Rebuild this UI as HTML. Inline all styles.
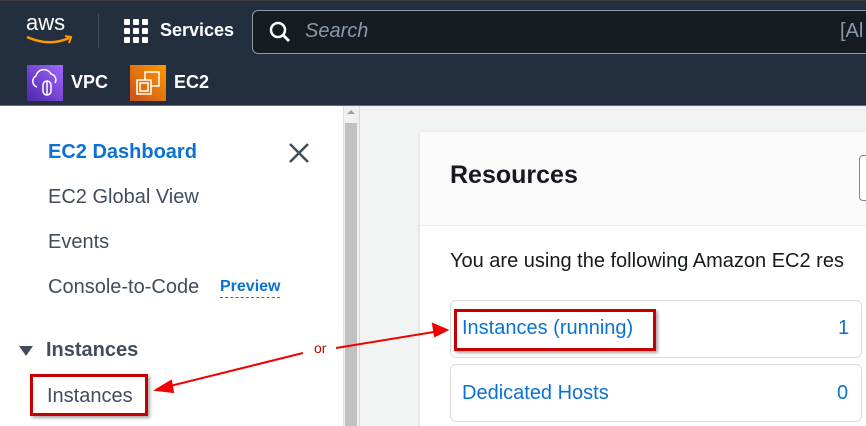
<!DOCTYPE html><html><head><style>
*{margin:0;padding:0;box-sizing:border-box}
html,body{width:866px;height:426px;overflow:hidden}
body{position:relative;font-family:"Liberation Sans",sans-serif;background:#f2f3f3}
.a{position:absolute;white-space:nowrap}
.nav{font-size:20px;color:#414d5c}
.rb{position:absolute;border:3px solid #c40000;box-shadow:2px 2px 3px rgba(0,0,0,.35)}
</style></head><body>
<div class="a" style="left:0;top:0;width:866px;height:106px;background:#232f3e;border-top:1px solid #3a3a3a"></div>
<div class="a" style="left:0;top:105px;width:866px;height:1px;background:#5f6b7a"></div>
<div class="a" style="left:26px;top:10px;color:#fff;font-size:22px">aws</div>
<svg class="a" style="left:25px;top:34px" width="50" height="12"><path d="M2 3 Q24 13 44 4" stroke="#ff9900" stroke-width="2.5" fill="none"/><path d="M40 2 L46 3 L44 9" stroke="#ff9900" stroke-width="2" fill="none"/></svg>
<div class="a" style="left:98px;top:14px;width:1px;height:34px;background:#414d5c"></div>
<svg class="a" style="left:124px;top:19px" width="24" height="24" fill="#fff"><rect x="0" y="0" width="6" height="6" rx="1"/><rect x="9" y="0" width="6" height="6" rx="1"/><rect x="18" y="0" width="6" height="6" rx="1"/><rect x="0" y="9" width="6" height="6" rx="1"/><rect x="9" y="9" width="6" height="6" rx="1"/><rect x="18" y="9" width="6" height="6" rx="1"/><rect x="0" y="18" width="6" height="6" rx="1"/><rect x="9" y="18" width="6" height="6" rx="1"/><rect x="18" y="18" width="6" height="6" rx="1"/></svg>
<div class="a" style="left:160px;top:20px;color:#fff;font-size:18px;font-weight:bold">Services</div>
<div class="a" style="left:252px;top:10px;width:620px;height:44px;background:#161a21;border:1px solid #8d99a8;border-radius:6px"></div>
<svg class="a" style="left:268px;top:20px" width="24" height="24"><circle cx="10" cy="10" r="7" stroke="#fff" stroke-width="2.5" fill="none"/><path d="M15 15 L21 21" stroke="#fff" stroke-width="2.8"/></svg>
<div class="a" style="left:305px;top:20px;color:#8d99a8;font-size:20px;font-style:italic">Search</div>
<div class="a" style="left:840px;top:20px;color:#8d99a8;font-size:20px">[Al</div>
<div class="a" style="left:27px;top:65px;width:36px;height:36px;background:linear-gradient(45deg,#4d27a8,#a166ff)"></div>
<svg class="a" style="left:27px;top:65px" width="36" height="36" fill="none" stroke="#fff" stroke-width="1.5"><path d="M10 22 A6 6 0 0 1 9 11 A8 8 0 0 1 24 9 A6 6 0 0 1 28 18"/><rect x="16" y="16" width="8" height="14" rx="4"/><path d="M20 16 V30"/></svg>
<div class="a" style="left:71px;top:72px;color:#fff;font-size:18px;font-weight:bold">VPC</div>
<div class="a" style="left:130px;top:65px;width:36px;height:36px;background:linear-gradient(45deg,#c8511b,#ff9900)"></div>
<svg class="a" style="left:130px;top:65px" width="36" height="36" fill="none" stroke="#fff" stroke-width="1.5"><rect x="15" y="7" width="14" height="14"/><rect x="7" y="15" width="14" height="14" fill="#e07010"/><rect x="10" y="18" width="8" height="8"/></svg>
<div class="a" style="left:174px;top:72px;color:#fff;font-size:18px;font-weight:bold">EC2</div>
<div class="a" style="left:0;top:106px;width:343px;height:320px;background:#fff"></div>
<div class="a" style="left:343px;top:106px;width:16px;height:320px;background:#f0f0f0;border-left:1px solid #e0e0e0"></div>
<div class="a" style="left:345px;top:123px;width:12px;height:303px;background:#c1c1c1"></div>
<div class="a" style="left:347px;top:110px;width:0;height:0;border:4px solid transparent;border-bottom-color:#a0a0a0;border-top:0"></div>
<div class="a" style="left:359px;top:106px;width:1px;height:320px;background:#d5dbdb"></div>
<div class="a nav" style="left:48px;top:141px;color:#0972d3;font-weight:bold">EC2 Dashboard</div>
<svg class="a" style="left:288px;top:142px" width="22" height="22"><path d="M2 2 L20 20 M20 2 L2 20" stroke="#414d5c" stroke-width="2.5"/></svg>
<div class="a nav" style="left:48px;top:186px">EC2 Global View</div>
<div class="a nav" style="left:48px;top:231px">Events</div>
<div class="a nav" style="left:48px;top:276px">Console-to-Code</div>
<div class="a" style="left:220px;top:278px;font-size:16px;font-weight:bold;color:#0972d3;border-bottom:1px dashed #0972d3;padding-bottom:1px">Preview</div>
<svg class="a" style="left:18px;top:345px" width="16" height="12"><path d="M1 1 H15 L8 11Z" fill="#414d5c"/></svg>
<div class="a nav" style="left:46px;top:339px;font-weight:bold">Instances</div>
<div class="a nav" style="left:47px;top:385px">Instances</div>
<div class="rb" style="left:30px;top:374px;width:118px;height:42px"></div>
<div class="a" style="left:419px;top:131px;width:460px;height:300px;background:#fff;border:1px solid #e9ebed;border-radius:4px;box-shadow:0 1px 2px rgba(0,0,0,.15)"></div>
<div class="a" style="left:420px;top:132px;width:450px;height:94px;background:#fafafa;border-bottom:1px solid #e9ebed"></div>
<div class="a" style="left:450px;top:161px;font-size:25px;font-weight:bold;color:#16191f">Resources</div>
<div class="a" style="left:859px;top:155px;width:20px;height:46px;border:1px solid #7d8998;border-radius:4px;background:#fff"></div>
<div class="a" style="left:450px;top:250px;font-size:20px;color:#16191f">You are using the following Amazon EC2 res</div>
<div class="a" style="left:450px;top:300px;width:412px;height:58px;border:1px solid #d5dbdb;border-radius:6px;background:#fff"></div>
<div class="a" style="left:450px;top:364px;width:412px;height:58px;border:1px solid #d5dbdb;border-radius:6px;background:#fff"></div>
<div class="a" style="left:462px;top:317px;font-size:20px;color:#0972d3">Instances (running)</div>
<div class="a" style="left:838px;top:317px;font-size:20px;color:#0972d3">1</div>
<div class="a" style="left:462px;top:382px;font-size:20px;color:#0972d3">Dedicated Hosts</div>
<div class="a" style="left:837px;top:382px;font-size:20px;color:#0972d3">0</div>
<div class="rb" style="left:454px;top:309px;width:202px;height:42px"></div>
<svg class="a" style="left:0;top:0" width="866" height="426"><g stroke="#f00000" stroke-width="2" fill="#f00000"><path d="M303 353 L162 388"/><path d="M156 390 L171 381 L173 392Z"/><path d="M336 348 L440 331"/><path d="M447 330 L433 324 L435 336Z"/></g></svg>
<div class="a" style="left:314px;top:340px;font-size:14px;color:#c00000">or</div>
</body></html>
